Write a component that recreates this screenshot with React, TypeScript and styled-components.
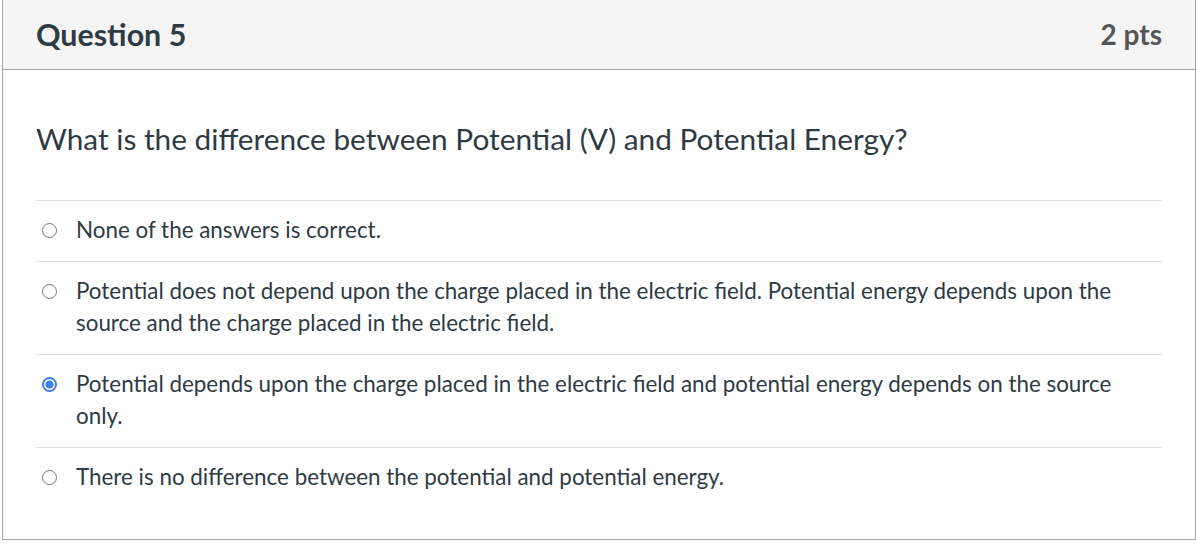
import React from "react";
import styled, { createGlobalStyle } from "styled-components";

const Global = createGlobalStyle`
  html, body { margin: 0; padding: 0; background: #ffffff; }
  body { font-family: Lato, "Helvetica Neue", Arial, sans-serif; color: #2d3b45; }
`;

const Page = styled.div`
  padding: 0 0 0 2px;
  width: 1194px;
`;

const Card = styled.div`
  margin-top: -1px;
  border: 1px solid #a5a5a5;
  background: #ffffff;
`;

const Header = styled.div`
  display: flex;
  align-items: center;
  justify-content: space-between;
  height: 70px;
  padding: 0 33px 2px 33px;
  background: #f5f5f5;
  border-bottom: 1px solid #a5a5a5;
  box-sizing: border-box;
`;

const Title = styled.h2`
  margin: 0;
  font-size: 30.4px;
  font-weight: 700;
  color: #2d3b45;
`;

const Points = styled.div`
  font-size: 28px;
  font-weight: 700;
  color: #555555;
`;

const Body = styled.div`
  padding: 51px 33px 31px 33px;
`;

const QuestionText = styled.p`
  margin: 0 0 43px 0;
  font-size: 29.8px;
  line-height: 36px;
  color: #2d3b45;
`;

const Answers = styled.div`
  display: flex;
  flex-direction: column;
`;

const Answer = styled.label`
  display: flex;
  align-items: flex-start;
  gap: 19px;
  padding: 13px 0 15px 0;
  border-top: 1px solid #dddddd;
  font-size: 22.4px;
  line-height: 32px;
  color: #2d3b45;
`;

const Radio = styled.input`
  appearance: none;
  -webkit-appearance: none;
  box-sizing: border-box;
  display: block;
  margin: 8.5px 0 0 6px;
  padding: 0;
  width: 15px;
  height: 15px;
  flex: 0 0 15px;
  border-radius: 50%;
  border: 1.4px solid #777777;
  background: #ffffff;

  &:checked {
    border: 2.3px solid #3b7ff0;
    background: radial-gradient(circle, #3b7ff0 0 3.8px, #ffffff 4.3px);
  }
`;

const AnswerText = styled.span`
  flex: 1;
  padding-right: 40px;
`;

const answers = [
  { text: "None of the answers is correct.", checked: false },
  {
    text: "Potential does not depend upon the charge placed in the electric field. Potential energy depends upon the source and the charge placed in the electric field.",
    checked: false,
  },
  {
    text: "Potential depends upon the charge placed in the electric field and potential energy depends on the source only.",
    checked: true,
  },
  { text: "There is no difference between the potential and potential energy.", checked: false },
];

export default function App() {
  return (
    <>
      <Global />
      <Page>
        <Card>
          <Header>
            <Title>Question 5</Title>
            <Points>2 pts</Points>
          </Header>
          <Body>
            <QuestionText>What is the difference between Potential (V) and Potential Energy?</QuestionText>
            <Answers>
              {answers.map((a, i) => (
                <Answer key={i}>
                  <Radio type="radio" name="q5" defaultChecked={a.checked} />
                  <AnswerText>{a.text}</AnswerText>
                </Answer>
              ))}
            </Answers>
          </Body>
        </Card>
      </Page>
    </>
  );
}
